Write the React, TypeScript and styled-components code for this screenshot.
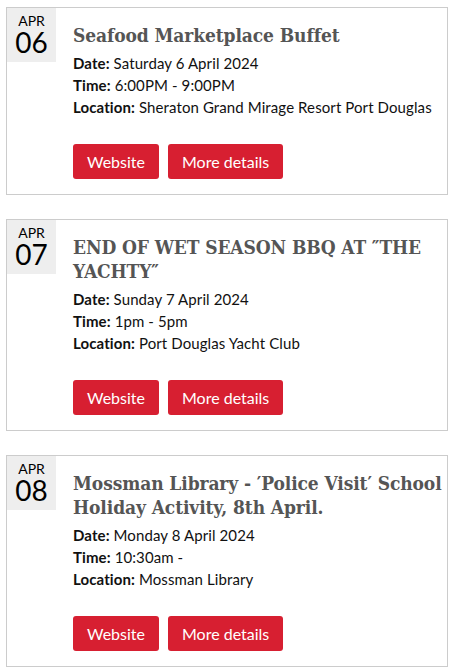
import React from 'react';
import styled, { createGlobalStyle } from 'styled-components';

interface EventItem {
  id: number;
  month: string;
  day: string;
  title: string;
  date: string;
  time: string;
  location: string;
}

const events: EventItem[] = [
  {
    id: 1,
    month: 'APR',
    day: '06',
    title: 'Seafood Marketplace Buffet',
    date: 'Saturday 6 April 2024',
    time: '6:00PM - 9:00PM',
    location: 'Sheraton Grand Mirage Resort Port Douglas',
  },
  {
    id: 2,
    month: 'APR',
    day: '07',
    title: 'END OF WET SEASON BBQ AT \u2033THE YACHTY\u2033',
    date: 'Sunday 7 April 2024',
    time: '1pm - 5pm',
    location: 'Port Douglas Yacht Club',
  },
  {
    id: 3,
    month: 'APR',
    day: '08',
    title: 'Mossman Library - \u2032Police Visit\u2032 School Holiday Activity, 8th April.',
    date: 'Monday 8 April 2024',
    time: '10:30am -',
    location: 'Mossman Library',
  },
];

const GlobalStyle = createGlobalStyle`
  body {
    margin: 0;
    background: #fff;
    font-family: Lato, "Open Sans", sans-serif;
    color: #111;
  }
`;

const List = styled.div`
  display: flex;
  flex-direction: column;
  gap: 24px;
  padding: 7px 6px;
`;

const Card = styled.div`
  display: flex;
  align-items: flex-start;
  border: 1px solid #cccccc;
  background: #fff;
`;

const DateBox = styled.div`
  flex: 0 0 49px;
  display: flex;
  flex-direction: column;
  align-items: center;
  padding: 5px 0 7px;
  background: #eeeeee;
  color: #000;
`;

const Month = styled.div`
  font-size: 14px;
  line-height: 16px;
`;

const Day = styled.div`
  font-size: 28px;
  line-height: 26px;
`;

const Body = styled.div`
  flex: 1;
  padding: 15px 0 15px 17px;
`;

const Title = styled.h2`
  margin: 0 0 5px;
  font-family: "DejaVu Serif Condensed", "DejaVu Serif", "Liberation Serif", serif;
  font-stretch: condensed;
  font-weight: 700;
  font-size: 19px;
  line-height: 24px;
  letter-spacing: -0.1px;
  color: #555555;
`;

const Detail = styled.div`
  font-size: 15px;
  line-height: 22px;
  letter-spacing: 0.1px;

  b {
    font-weight: 700;
  }
`;

const Actions = styled.div`
  display: flex;
  gap: 9px;
  margin-top: 26px;
`;

const Button = styled.a`
  display: inline-flex;
  align-items: center;
  height: 35px;
  padding: 0 14px;
  background: #d71f31;
  color: #fff;
  border-radius: 3px;
  font-size: 16px;
  text-decoration: none;
  cursor: pointer;
`;

const App: React.FC = () => {
  return (
    <>
      <GlobalStyle />
      <List>
        {events.map(ev => (
          <Card key={ev.id}>
            <DateBox>
              <Month>{ev.month}</Month>
              <Day>{ev.day}</Day>
            </DateBox>
            <Body>
              <Title>{ev.title}</Title>
              <Detail><b>Date:</b> {ev.date}</Detail>
              <Detail><b>Time:</b> {ev.time}</Detail>
              <Detail><b>Location:</b> {ev.location}</Detail>
              <Actions>
                <Button>Website</Button>
                <Button>More details</Button>
              </Actions>
            </Body>
          </Card>
        ))}
      </List>
    </>
  );
};

export default App;
